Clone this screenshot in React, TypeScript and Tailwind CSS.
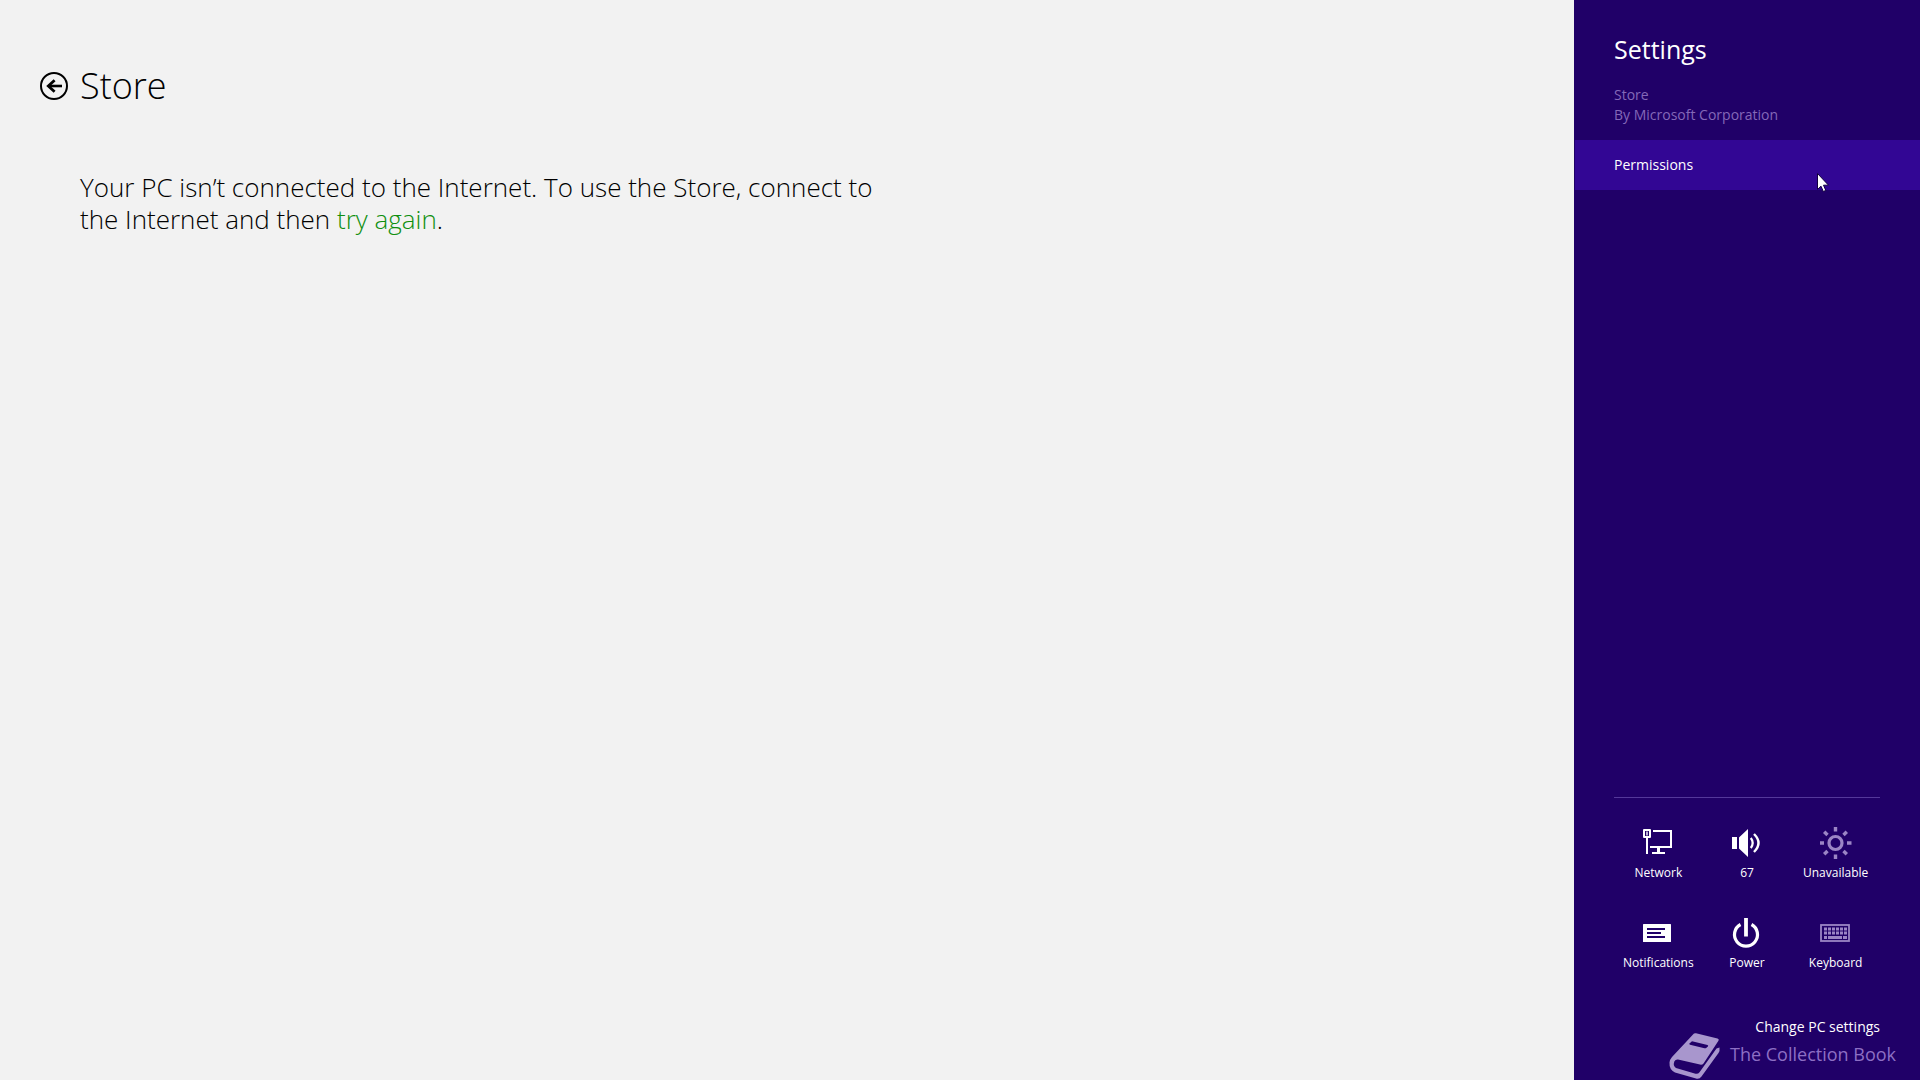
import type { ReactNode } from "react";

function BackIcon() {
  return (
    <svg className="size-7" viewBox="0 0 28 28" fill="none" stroke="currentColor">
      <circle cx="14" cy="14" r="13" strokeWidth="2" />
      <path d="M22 14H8.5" strokeWidth="2.6" />
      <path d="M14.6 8.2L8.3 14l6.3 5.8" strokeWidth="2.8" />
    </svg>
  );
}

function NetworkIcon() {
  return (
    <svg className="h-8 w-8" viewBox="0 0 32 32" fill="none" stroke="currentColor">
      <path d="M11 4h18v16H8" strokeWidth="2" />
      <path d="M10 26h13" strokeWidth="2" />
      <path d="M16.500 20v6" strokeWidth="3" />
      <path d="M2 3h6v7H2z" strokeWidth="2" strokeLinejoin="round" />
      <path d="M5 4.500v4" strokeWidth="1.400" />
      <path d="M5 10v17" strokeWidth="2" />
    </svg>
  );
}

function VolumeIcon() {
  return (
    <svg className="h-8 w-8" viewBox="0 0 32 32" fill="none" stroke="currentColor">
      <path d="M1 10h5v12H1zM8 10.500L17 2v28L8 21.500z" fill="currentColor" stroke="none" />
      <path d="M19.800 11q3.800 5 0 10" strokeWidth="2.200" />
      <path d="M23 7q9 9 0 18" strokeWidth="2.400" />
    </svg>
  );
}

function BrightnessIcon() {
  return (
    <svg className="h-8 w-8" viewBox="0 0 32 32" fill="none" stroke="currentColor">
      <circle cx="15.500" cy="16" r="6.500" strokeWidth="3.200" />
      <path
        d="M15.500 0v4.500M15.500 27.500V32M0 16h4M27 16h4.500M4.200 4.700l3.300 3.300M23.500 24l3.300 3.300M4.200 27.300L7.500 24M23.500 8l3.300-3.300"
        strokeWidth="3.400"
      />
    </svg>
  );
}

function NotificationsIcon() {
  return (
    <svg className="h-8 w-8" viewBox="0 0 32 32">
      <rect x="1" y="7" width="28" height="18" rx="0.500" fill="currentColor" />
      <path d="M5 12h18M5 16h14M5 20h18" stroke="#200068" strokeWidth="2" />
    </svg>
  );
}

function PowerIcon() {
  return (
    <svg className="h-8 w-8" viewBox="0 0 32 32" fill="none" stroke="currentColor">
      <path d="M9.500 7.500A11.500 11.500 0 1 0 20.500 7.500" strokeWidth="3.200" />
      <path d="M15 1v18.500" strokeWidth="3.800" />
    </svg>
  );
}

function KeyboardIcon() {
  return (
    <svg className="h-8 w-8" viewBox="0 0 32 32" fill="none" stroke="currentColor">
      <rect x="1" y="8" width="28" height="16" strokeWidth="1.800" />
      <path d="M4 12h23M4 16h23" strokeWidth="3" strokeDasharray="3 1" />
      <path d="M4 20.500h3M8 20.500h14M23 20.500h4" strokeWidth="3" />
    </svg>
  );
}

function BookIcon() {
  return (
    <svg className="-mt-[5px] h-12 w-[51px] shrink-0" viewBox="0 0 51 48">
      <path
        d="M24 2.500Q25 1 27 1.300L48.500 6.600Q50.500 7.200 49.300 9L34.500 31.500Q33.300 33 31 32.600L9 27.500Q6.500 27.200 5.300 29.500Q3.800 34 7 36L26.500 41.700Q29 42.300 30.500 40.200L47.500 16.500L50.500 15.500Q51 19 49.500 21L32.500 44.500Q30.500 47.500 27 46.600L6 40.500Q0 37.500 .5 30.500Q.8 27.500 3 25z"
        fill="currentColor"
      />
      <path d="M23 9.200L38.500 13Q39.800 13.500 38.800 14.500L37.200 16Q36.500 16.500 35.500 16.300L21 12.700Q20 12.400 20.700 11.300z" fill="#200068" />
    </svg>
  );
}

function Cursor() {
  return (
    <svg className="pointer-events-none absolute top-[33px] right-[91px] h-5 w-3" viewBox="0 0 12 20">
      <path
        d="M.5 .5v16l3.500-3.300 2.300 5.300 2.500-1.100-2.300-5.200h5z"
        fill="#fff"
        stroke="#120040"
        strokeWidth="1"
      />
    </svg>
  );
}

const tiles: { label: string; icon: ReactNode; dim?: boolean }[] = [
  { label: "Network", icon: <NetworkIcon /> },
  { label: "67", icon: <VolumeIcon /> },
  { label: "Unavailable", icon: <BrightnessIcon />, dim: true },
  { label: "Notifications", icon: <NotificationsIcon /> },
  { label: "Power", icon: <PowerIcon /> },
  { label: "Keyboard", icon: <KeyboardIcon />, dim: true },
];

export default function App() {
  return (
    <div className="flex min-h-screen bg-[#f2f2f2] font-['Open_Sans',sans-serif] text-black">
      <main className="min-w-0 flex-1 px-10 pt-14">
        <header className="flex h-15 items-center gap-3">
          <button type="button" aria-label="Back">
            <BackIcon />
          </button>
          <h1 className="text-4xl font-light">Store</h1>
        </header>
        <p className="mt-[55px] ml-10 max-w-[820px] text-[26px] leading-8 font-light">
          Your PC isn’t connected to the Internet. To use the Store, connect to the Internet and then{" "}
          <a href="#retry" className="text-[#0f8f0f]">
            try again
          </a>
          .
        </p>
      </main>

      <aside className="flex w-[346px] shrink-0 flex-col bg-[#200068] text-white">
        <div className="px-10 pt-[31px]">
          <h2 className="text-[25px] leading-9">Settings</h2>
          <div className="mt-[18px] text-sm leading-5 text-[#8468b8]">
            <p>Store</p>
            <p>By Microsoft Corporation</p>
          </div>
        </div>
        <div className="relative mt-[15px] ml-px">
          <button type="button" className="h-[50px] w-full bg-[#320694] px-[39px] text-left text-sm">
            Permissions
          </button>
          <Cursor />
        </div>

        <div className="mx-10 mt-auto border-t border-[#54389a] pt-[29px]">
          <div className="grid grid-cols-3 gap-y-8">
            {tiles.map((tile) => (
              <button type="button" key={tile.label} className="flex flex-col items-center gap-0.5">
                <span className={tile.dim ? "text-[#9b85c5]" : "text-white"}>{tile.icon}</span>
                <span className="text-xs leading-6">{tile.label}</span>
              </button>
            ))}
          </div>
        </div>
        <a href="#pc-settings" className="mt-[42px] mr-10 self-end text-sm leading-5">
          Change PC settings
        </a>
        <footer className="flex h-[43px] items-start justify-end gap-2.5 pr-6 text-[#a896cd]">
          <BookIcon />
          <span className="text-lg leading-[34px] text-[#8d6fc4]">The Collection Book</span>
        </footer>
      </aside>
    </div>
  );
}
